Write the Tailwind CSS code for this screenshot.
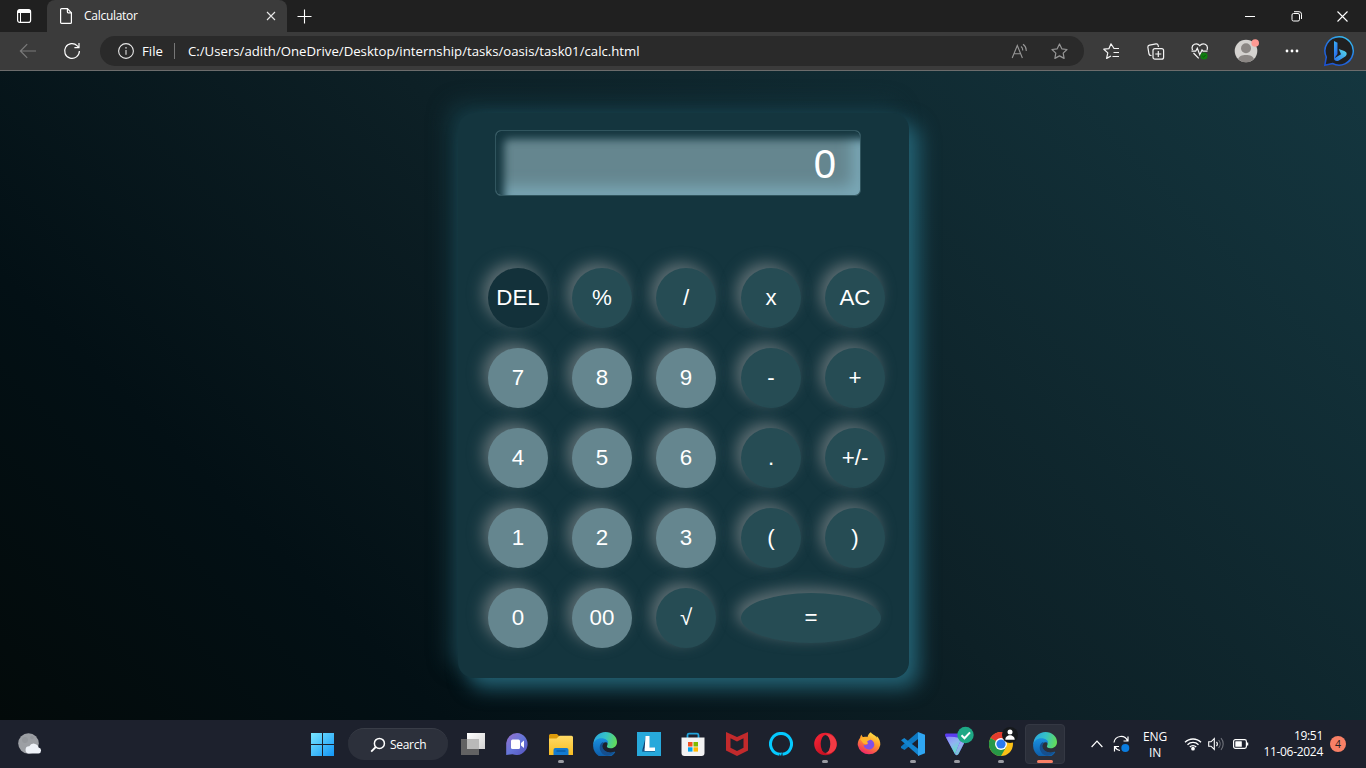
<!DOCTYPE html>
<html lang="en">
<head>
<meta charset="utf-8">
<title>Calculator</title>
<script src="https://cdn.jsdelivr.net/npm/@tailwindcss/browser@4"></script>
</head>
<body class="w-[1366px] h-[768px] overflow-hidden flex flex-col font-['Open_Sans','Noto_Sans',sans-serif] text-white bg-black">
<!-- tab strip -->
<header class="h-8 shrink-0 bg-[#202020] flex">
  <div class="w-[47px] h-8 flex items-center justify-center">
    <svg width="16" height="16" viewBox="0 0 16 16"><rect x="1.6" y="1.6" width="13" height="12.8" rx="2.2" fill="none" stroke="#fff" stroke-width="1.2"/><path d="M1.6 5V3.6a2 2 0 0 1 2-2h9a2 2 0 0 1 2 2V5z" fill="#fff"/><path d="M4.5 5v9" stroke="#fff"/></svg>
  </div>
  <div class="w-60 h-8 bg-[#3b3b3b] rounded-t-lg flex items-center pl-3 pr-[11px]">
    <svg width="14" height="18" viewBox="0 0 14 18" fill="none" stroke="#fff" stroke-width="1.2"><path d="M1.6 2.6a1 1 0 0 1 1-1h5.8l4 4.2v9.6a1 1 0 0 1-1 1H2.6a1 1 0 0 1-1-1z"/><path d="M8.4 1.6v3.4a.8.8 0 0 0 .8.8h3.200"/></svg>
    <span class="ml-[11px] text-[12px] leading-4 tracking-[-0.28px]">Calculator</span>
    <svg class="ml-auto" width="10" height="10" viewBox="0 0 10 10"><path d="M1 1l8 8M9 1L1 9" stroke="#e8e8e8" stroke-width="1.1"/></svg>
  </div>
  <div class="w-[35px] h-8 flex items-center justify-center">
    <svg width="15" height="15" viewBox="0 0 15 15"><path d="M7.500 .5v14M.5 7.500h14" stroke="#fff" stroke-width="1.1"/></svg>
  </div>
  <div class="ml-auto mr-px flex h-8">
    <div class="w-[46px] flex items-center justify-center"><svg width="10" height="10"><path d="M0 5.500h10" stroke="#fff"/></svg></div>
    <div class="w-[46px] flex items-center justify-center"><svg width="11" height="11" viewBox="0 0 11 11" fill="none" stroke="#fff"><rect x="1" y="2.500" width="7.500" height="7.500" rx="1.500"/><path d="M3 .7h5A2.500 2.500 0 0 1 10.500 3.200V8"/></svg></div>
    <div class="w-[46px] flex items-center justify-center"><svg width="11" height="11" viewBox="0 0 11 11"><path d="M.5.5l10 10M10.500.5l-10 10" stroke="#fff" stroke-width="1.100"/></svg></div>
  </div>
</header>
<!-- toolbar -->
<nav class="h-[39px] shrink-0 bg-[#3b3b3b] border-b border-[#6c6c6c] flex items-center">
  <div class="w-14 flex justify-center"><svg width="18" height="16" viewBox="0 0 18 16" fill="none" stroke="#7b7b7b" stroke-width="1.200"><path d="M17 8H1.500M8.200 1.200L1.400 8l6.800 6.800"/></svg></div>
  <div class="w-8 flex justify-center"><svg width="18" height="18" viewBox="0 0 18 18" fill="none" stroke="#fff" stroke-width="1.200"><path d="M16.400 9A7.400 7.400 0 1 1 14.300 3.800L15.600 5.200"/><path d="M16 1v4.600h-4.600"/></svg></div>
  <div class="ml-3 w-[984px] h-[30px] rounded-full bg-[#2a2a2a] flex items-center pl-[18px] pr-4">
    <svg width="16" height="16" viewBox="0 0 16 16"><circle cx="8" cy="8" r="7.400" fill="none" stroke="#e8e8e8" stroke-width="1.100"/><path d="M8 7v4.800" stroke="#bbb" stroke-width="1.400"/><circle cx="8" cy="4.800" r=".9" fill="#bbb"/></svg>
    <span class="ml-2 w-[24px] text-[13.200px] leading-4 whitespace-nowrap">File</span>
    <span class="ml-2 w-px h-4 bg-[#777]"></span>
    <span class="ml-[13px] text-[13.200px] leading-4 whitespace-nowrap">C:/Users/adith/OneDrive/Desktop/internship/tasks/oasis/task01/calc.html</span>
    <svg class="ml-auto" width="17" height="16" viewBox="0 0 17 16" fill="none" stroke="#969696" stroke-width="1.100"><path d="M1.200 15L6.300 2.500 11.400 15M3 10.700h6.600M10 3.500a4.500 4.500 0 0 1 1.700 4M12 1.200a7.500 7.500 0 0 1 3.200 6.800"/></svg>
    <svg class="ml-[23px]" width="17" height="17" viewBox="0 0 17 17" fill="none" stroke="#969696" stroke-width="1.200" stroke-linejoin="round"><path d="M8.500 1l2.300 4.800 5.200.7-3.800 3.600.9 5.300-4.600-2.500-4.600 2.500.9-5.300L1 6.500l5.200-.7z"/></svg>
  </div>
  <div class="ml-[19px] flex items-center">
    <svg width="17" height="17" viewBox="0 0 17 17" fill="none" stroke="#f4f4f4" stroke-width="1.200" stroke-linejoin="round"><path d="M16 5.500h-5L8 .8 6 5.600.8 6.200l4 3.700-1.200 5.500L8 13M10.500 9.500H16M9.500 13.500H16"/></svg>
    <svg class="ml-[27px]" width="18" height="17" viewBox="0 0 18 17" fill="none" stroke="#f4f4f4" stroke-width="1.200"><path d="M4.500 12.500H4A2 2 0 0 1 2 11L.9 4.500a2 2 0 0 1 1.600-2.300L9 .9a2 2 0 0 1 2.200 1.600L11.400 4"/><rect x="6" y="5.600" width="10.600" height="10.600" rx="2"/><path d="M11.300 8v6M8.300 11h6"/></svg>
    <svg class="ml-[26px]" width="18" height="17" viewBox="0 0 18 17" fill="none" stroke="#f4f4f4" stroke-width="1.200"><path d="M1.500 7C-.5 1 6-.8 8.800 2.700 11.500-.8 18 1 16 7M2.500 10l5.200 5.400"/><path d="M.5 8.200h4.200l1.600-3 2.500 6.500 2.200-4.800 1 1.300h4.500"/><circle cx="13" cy="13" r="3.600" fill="#107c10" stroke="none"/><path d="M11.400 13l1.200 1.200 2-2.200" stroke="#0b4a0b" stroke-width=".8"/></svg>
    <svg class="ml-[25px]" width="26" height="24" viewBox="0 0 26 24"><circle cx="12" cy="12" r="11.300" fill="#d4d2cf"/><circle cx="12" cy="9.300" r="5" fill="#8b8784"/><path d="M4.200 20.200C4.200 14.500 19.800 14.500 19.800 20.200A11.300 11.300 0 0 1 4.200 20.200z" fill="#8b8784"/><circle cx="21.200" cy="4" r="3.800" fill="#ff9a93"/></svg>
    <svg class="ml-[25px]" width="14" height="4" fill="#fff"><circle cx="2" cy="2" r="1.400"/><circle cx="7" cy="2" r="1.400"/><circle cx="12" cy="2" r="1.400"/></svg>
    <svg class="ml-6" width="32" height="32" viewBox="0 0 32 32"><defs><linearGradient id="bb" x1="0" y1="1" x2=".6" y2="0"><stop offset="0" stop-color="#1b4fd0"/><stop offset=".6" stop-color="#2372e4"/><stop offset="1" stop-color="#35b5f0"/></linearGradient><linearGradient id="bl" x1="0" y1="0" x2=".5" y2="1"><stop offset="0" stop-color="#3bb4f5"/><stop offset="1" stop-color="#2765ea"/></linearGradient><linearGradient id="br" x1="0" y1="1" x2="1" y2="0"><stop offset="0" stop-color="#2a74f0"/><stop offset="1" stop-color="#58dfe8"/></linearGradient></defs><path d="M16 1.700a14.200 14.200 0 1 1-6.500 26.800L1.800 30.300 3.300 22A14.200 14.200 0 0 1 16 1.700z" fill="#202020" stroke="url(#bb)" stroke-width="1.500"/><path d="M11 6l3.500 1.700V19l-3.500 5z" fill="url(#bl)"/><path d="M11 23.500L18 19.300l-2.300-5.300 5.600 2c3.600 1.500 2.600 4.600.6 5.800l-6 3.600c-2.500 1.300-4.900 0-4.900-1.900z" fill="url(#br)"/></svg>
  </div>
</nav>
<!-- page -->
<main class="h-[649px] shrink-0 overflow-hidden flex justify-center pl-[1px] pt-[42px] bg-[linear-gradient(45deg,#030a0a_0%,#031015_22%,#0d2026_52%,#14363f_100%)]">
  <section class="w-[451px] h-[565px] rounded-[16px] bg-[#14353e] shadow-[10px_10px_20px_#246274,-10px_-10px_20px_#14353e] pt-[17px] font-['Liberation_Sans',Arial,sans-serif]">
    <div class="ml-[37px] w-[366px] h-[66px] rounded-md border border-[#31555e] bg-[#65868f] shadow-[inset_8px_8px_8px_#14353e,inset_-8px_-8px_15px_#7aa8b7] flex items-center justify-end pt-0.5 pr-6 text-[40px] leading-none">0</div>
    <div class="mt-[72px] ml-[30px] grid grid-cols-[84px_84px_85px_84px_60px] auto-rows-[60px] gap-y-5 text-[22.300px] *:flex *:items-center *:justify-center *:size-[60px] *:rounded-[50%] *:shadow-[-5px_-5px_15px_#5e6e73] *:bg-[#264c54]">
      <button class="bg-[#13313a]!">DEL</button><button>%</button><button>/</button><button>x</button><button>AC</button>
      <button class="bg-[#65868f]!">7</button><button class="bg-[#65868f]!">8</button><button class="bg-[#65868f]!">9</button><button>-</button><button>+</button>
      <button class="bg-[#65868f]!">4</button><button class="bg-[#65868f]!">5</button><button class="bg-[#65868f]!">6</button><button>.</button><button>+/-</button>
      <button class="bg-[#65868f]!">1</button><button class="bg-[#65868f]!">2</button><button class="bg-[#65868f]!">3</button><button>(</button><button>)</button>
      <button class="bg-[#65868f]!">0</button><button class="bg-[#65868f]!">00</button><button>√</button><button class="col-span-2 w-[140px]! h-[50px]! self-center">=</button>
    </div>
  </section>
</main>
<!-- taskbar -->
<svg class="absolute" width="0" height="0"><defs>
<linearGradient id="win" x1="0" y1="0" x2="1" y2="1"><stop offset="0" stop-color="#79e6ff"/><stop offset="1" stop-color="#1296f6"/></linearGradient>
<linearGradient id="e1" x1="0" y1=".3" x2="1" y2=".5"><stop offset="0" stop-color="#2aa6e0"/><stop offset=".5" stop-color="#35c2c6"/><stop offset="1" stop-color="#63dc58"/></linearGradient>
<linearGradient id="e2" x1="0" y1="0" x2="0" y2="1"><stop offset="0" stop-color="#1a8fe0"/><stop offset="1" stop-color="#0c59a4"/></linearGradient>
<linearGradient id="fo" x1="0" y1="0" x2="0" y2="1"><stop offset="0" stop-color="#ffdb66"/><stop offset="1" stop-color="#f8bd22"/></linearGradient>
<linearGradient id="ff" x1=".8" y1="0" x2=".3" y2="1"><stop offset="0" stop-color="#fff04a"/><stop offset=".45" stop-color="#ff9a2a"/><stop offset="1" stop-color="#f0206a"/></linearGradient>
<linearGradient id="ch" x1="0" y1="0" x2="1" y2="1"><stop offset="0" stop-color="#9a70cc"/><stop offset=".5" stop-color="#6576d8"/><stop offset="1" stop-color="#5550bb"/></linearGradient>
<linearGradient id="vp" x1="0" y1="0" x2=".6" y2="1"><stop offset="0" stop-color="#6a4af5"/><stop offset=".45" stop-color="#a4a0fa"/><stop offset="1" stop-color="#54e0b8"/></linearGradient>
<linearGradient id="vp2" x1="0" y1="0" x2=".5" y2="1"><stop offset="0" stop-color="#8f86f8"/><stop offset=".5" stop-color="#8fb4f0"/><stop offset="1" stop-color="#5fe3c4"/></linearGradient>
<linearGradient id="tv" x1="0" y1="0" x2="1" y2="1"><stop offset="0" stop-color="#fff"/><stop offset="1" stop-color="#d2d2d2"/></linearGradient>
<linearGradient id="op" x1="0" y1="0" x2="1" y2="1"><stop offset="0" stop-color="#ff2638"/><stop offset="1" stop-color="#a80818"/></linearGradient>
<g id="edge"><path d="M.3 13C.3 5 6 0 12.500 0 19 0 24 4.500 24 10c0 4-3 6.300-6.600 6.300-2.700 0-4-1.200-3.400-2.300 1.500-2.500.2-6-4-6C5 8 1 10 .3 13z" fill="url(#e1)"/><path d="M.2 12.500C.8 9 4.200 6.300 8.500 6.300c4 0 6.600 2.200 6.600 4.600C11.500 8.600 8 12 9.300 16c1.200 3.500 6.500 6 11.700 3.800 1-.4 1.500.2.900 1A12 12 0 0 1 .2 12.500z" fill="url(#e2)"/><path d="M9.300 10.200C4.500 13.500 6.500 22.500 14 23.800c3.400-.3 6.300-1.700 8-4-4.500 2.200-10.200.4-12-3.200-1-2.200-.8-4.700.8-6.400z" fill="#154f8e"/></g>
</defs></svg>
<footer class="h-12 shrink-0 bg-[#1d212d] flex items-center text-[12px]">
  <div class="ml-[2px] w-14 flex justify-center"><svg width="26" height="24" viewBox="0 0 26 24"><circle cx="11.500" cy="11.500" r="10.300" fill="#9c9fa4"/><circle cx="8" cy="8" r="3" fill="#94979c"/><circle cx="15" cy="5.500" r="1.800" fill="#94979c"/><path d="M12 21.500a3.600 3.600 0 0 1 .3-7.200 5 5 0 0 1 9.300 1.100 3.100 3.100 0 0 1-.1 6.100z" fill="#eef2f8"/></svg></div>
  <div class="ml-[253px] w-[23px]"><svg width="23" height="23" viewBox="0 0 23 23" fill="url(#win)"><path d="M0 0h11v11H0zM12 0h11v11H12zM0 12h11v11H0zM12 12h11v11H12z"/></svg></div>
  <div class="ml-[14px] w-[100px] h-8 rounded-full bg-[#2c303b] border-t border-[#393d47] flex items-center pl-[22px]">
    <svg width="16" height="16" viewBox="0 0 16 16" fill="none" stroke="#fff" stroke-width="1.500"><circle cx="9.400" cy="6.400" r="5"/><path d="M5.800 10L1.200 14.600" stroke-width="1.800"/></svg>
    <span class="ml-1 text-[12px] leading-4 tracking-[-0.300px]">Search</span>
  </div>
  <div class="ml-[3px] flex h-12 *:w-11 *:h-12 *:relative *:flex *:items-center *:justify-center">
    <div><svg width="24" height="24" viewBox="0 0 24 24"><rect x="6" y="1" width="18" height="16" fill="url(#tv)"/><rect x="0" y="7" width="18" height="16" fill="#666" opacity=".95"/><rect x="6" y="7" width="12" height="10" fill="#b9b9b9"/></svg></div>
    <div><svg width="24" height="24" viewBox="0 0 24 24"><path d="M12 1a11 11 0 1 1-4.500 21.200L1.200 23V11A11 11 0 0 1 12 1z" fill="url(#ch)"/><rect x="6" y="7.500" width="9" height="9.500" rx="1.500" fill="#fff"/><path d="M16 11l3-2.500v7.500l-3-2.500z" fill="#fff"/></svg></div>
    <div><svg width="24" height="24" viewBox="0 0 24 24"><path d="M0 3.500A1.500 1.500 0 0 1 1.500 2H8l2.500 2.500L8 7H0z" fill="#dc9a0a"/><path d="M0 6.500h7.500l3-2.700h12A1.500 1.500 0 0 1 24 5.300V23H0z" fill="url(#fo)"/><path d="M4.500 23v-5a2 2 0 0 1 2-2h11a2 2 0 0 1 2 2v5z" fill="#127ad0"/><path d="M7.500 19h9" stroke="#075aa4" stroke-width="1.400"/></svg><i class="absolute bottom-[5px] w-[6px] h-[3px] rounded-full bg-[#9a9ca2]"></i></div>
    <div><svg width="24" height="24" viewBox="0 0 24 24"><use href="#edge"/></svg></div>
    <div><svg width="24" height="24" viewBox="0 0 24 24"><path d="M0 0h24v24H0z" fill="#27a9db"/><path d="M9 4v11l-4 4.500z" fill="#123c6b"/><path d="M5 19.500l4.500-4 8.500.5v3.500z" fill="#123c6b"/><path d="M8.500 4h4v11.500H18v3.500H7.500z" fill="#fff"/></svg></div>
    <div><svg width="24" height="24" viewBox="0 0 24 24"><path d="M6.500 6V3A1.500 1.500 0 0 1 8 1.700h8A1.500 1.500 0 0 1 17.500 3v3" fill="none" stroke="#20a4dc" stroke-width="1.800"/><path d="M.5 5.500h23V21a3 3 0 0 1-3 3h-17a3 3 0 0 1-3-3z" fill="#f2f2f2"/><path d="M7 10h4.500v4.500H7z" fill="#f25022"/><path d="M12.500 10H17v4.500h-4.500z" fill="#7fba00"/><path d="M7 15.300h4.500v4.300H7z" fill="#00a4ef"/><path d="M12.500 15.300H17v4.300h-4.500z" fill="#ffb900"/></svg></div>
    <div><svg width="22" height="24" viewBox="0 0 22 24"><path d="M0 0l11 5L22 0v18.500L11 24 0 18.500z" fill="#c22a2c"/><path d="M4.500 6.200L11 9.500l6.500-3.300v9.600L11 19l-6.500-3.200z" fill="#1d212d"/></svg></div>
    <div><svg width="24" height="24" viewBox="0 0 24 24"><path d="M10.500 22.300A10.500 10.500 0 1 1 13.500 22.300" fill="none" stroke="#05caff" stroke-width="3"/><path d="M9.500 21l3.500-.5-1 3.500z" fill="#05caff"/></svg></div>
    <div><svg width="23" height="24" viewBox="0 0 23 24"><ellipse cx="11.500" cy="12" rx="11.300" ry="11.300" fill="url(#op)"/><path d="M11.500 3c4-2.500 11 2 11.200 9s-7 11.500-11.200 9z" fill="#f23a44"/><ellipse cx="11.500" cy="12" rx="4.800" ry="9" fill="#1d212d"/></svg><i class="absolute bottom-[5px] w-[6px] h-[3px] rounded-full bg-[#9a9ca2]"></i></div>
    <div><svg width="24" height="24" viewBox="0 0 24 24"><path d="M4.500 2.500c.3 1.500 1 2.300 1.800 2.800C8 4.500 9.500 4.700 10.500 5 11 3 12 1 14 .2c.3 2 4.500 2.600 6 5.600 0-.8-.2-1.400-.5-2 2.800 2.500 4 6 3.800 9.200A11.500 11.500 0 0 1 .7 13c0-3 .7-5 2.300-7 .2-1.200.7-2.500 1.500-3.500z" fill="url(#ff)"/><path d="M12 7.500c3 0 5.300 2.300 5.300 5s-2.500 5-5.300 5-5.300-2-5.300-4.700c1.500.8 3 .2 4.500-1.200-2.500-.2-3.500-1.600-3-2.800C9.500 7.800 10.500 7.500 12 7.500z" fill="#8050e8"/><path d="M3 7c2-2.500 5.500-2.500 8.800-1.300 1.700.7 2.300 2 .4 2.500-2 .6-2.700 1.400-1 3-2.800 1.700-5.200.6-5.700-.9z" fill="#ffb22c"/></svg></div>
    <div><svg width="24" height="24" viewBox="0 0 24 24"><path d="M17 0v7L3.500 18 0 16v-1.500z" fill="#0d78c2"/><path d="M0 8.300L3.300 6 18 17.500V24z" fill="#1384cf"/><path d="M17 0l7 2.800v18.400L17 24z" fill="#2fa6f2"/></svg><i class="absolute bottom-[5px] w-[6px] h-[3px] rounded-full bg-[#9a9ca2]"></i></div>
    <div><svg width="24" height="24" viewBox="0 0 24 24"><path d="M1.500 1.500h19c2 0 3 1.500 2 3.200L13.500 22c-.8 1.500-2.800 1.500-3.600 0L.3 4.200C-.4 2.800.2 1.500 1.500 1.500z" fill="#5b3df0"/><path d="M1 5.200c4-.8 8.500-.2 12.500.6 2.200.5 2.800 1.600 2 3.200L9.900 22z" fill="url(#vp2)"/><path d="M15.500 9L22 5.300 13.500 22c-.8 1.500-2.800 1.500-3.600 0z" fill="url(#vp)"/></svg><svg class="absolute left-[22px] top-[6px]" width="18" height="18" viewBox="0 0 18 18"><circle cx="8.500" cy="9" r="8.200" fill="#1ea885"/><path d="M4.500 9.200l3 3 5.500-5.800" fill="none" stroke="#fff" stroke-width="2"/></svg><i class="absolute bottom-[5px] w-[6px] h-[3px] rounded-full bg-[#9a9ca2]"></i></div>
    <div><svg width="24" height="24" viewBox="0 0 24 24"><circle cx="12" cy="12" r="12" fill="#fbc116"/><path d="M12 12L1.600 6A12 12 0 0 1 22.400 6z" fill="#e33b2e"/><path d="M12 12L1.600 6A12 12 0 0 0 12 24l5.200-9z" fill="#279847"/><path d="M12 5.500h11L22.400 6H12z" fill="#e33b2e"/><circle cx="12" cy="12" r="6" fill="#fff"/><circle cx="12" cy="12" r="4.600" fill="#2a7af0"/></svg><svg class="absolute left-[23px] top-[7px]" width="16" height="16" viewBox="0 0 16 16"><circle cx="8" cy="8" r="8" fill="#16191c"/><circle cx="8" cy="5" r="2.500" fill="#fff"/><path d="M3.300 12.800c0-6 9.400-6 9.400 0z" fill="#fff"/></svg><i class="absolute bottom-[5px] w-[6px] h-[3px] rounded-full bg-[#9a9ca2]"></i></div>
    <div><span class="w-10 h-10 rounded bg-[#2b2f3a] border border-[#343843] flex items-center justify-center"><svg width="24" height="24" viewBox="0 0 24 24"><use href="#edge"/></svg></span><i class="absolute bottom-[5px] w-4 h-[3px] rounded-full bg-[#f88066]"></i></div>
  </div>
  <div class="ml-auto flex items-center pr-5">
    <svg width="12" height="8" viewBox="0 0 12 8" fill="none" stroke="#fff" stroke-width="1.200"><path d="M.6 7L6 1.200 11.400 7"/></svg>
    <svg class="ml-[10px]" width="17" height="18" viewBox="0 0 17 18" fill="none" stroke="#fff" stroke-width="1.200"><path d="M1 7.500A7 7 0 0 1 14.500 6M15 1.500V6h-4.500M7 15.500A7 7 0 0 1 1.800 11.500M1.500 16.500V11.500H6"/><circle cx="12.300" cy="13" r="4" fill="#0a7de0" stroke="none"/></svg>
    <div class="ml-[12px] w-[26px] pt-0.5 text-center text-[12px] leading-4 tracking-[-0.100px]">ENG<br>IN</div>
    <svg class="ml-[16px]" width="18" height="14" viewBox="0 0 18 14" fill="none" stroke="#fff" stroke-width="1.300"><path d="M1 5.300a11.300 11.300 0 0 1 16 0M3.500 7.700a7.800 7.800 0 0 1 11 0M5.800 10a4.500 4.500 0 0 1 6.400 0"/><circle cx="9" cy="11.700" r="1.200" fill="#fff"/></svg>
    <svg class="ml-[6px]" width="17" height="14" viewBox="0 0 17 14" fill="none" stroke="#fff" stroke-width="1.100"><path d="M.7 4.800H3L6.300 1.500v11L3 9.200H.7z"/><path d="M8.500 4.800a3.500 3.500 0 0 1 0 4.400"/><path d="M10.600 3a6 6 0 0 1 0 8M13 1.200a8.800 8.800 0 0 1 0 11.600" stroke="#70737b"/></svg>
    <svg class="ml-[8px]" width="16" height="10" viewBox="0 0 16 10"><rect x=".6" y=".6" width="12.800" height="8.800" rx="1.800" fill="none" stroke="#fff" stroke-width="1.200"/><rect x="2.300" y="2.300" width="6.500" height="5.400" rx=".5" fill="#fff"/><path d="M14.500 3.500v3" stroke="#fff" stroke-width="1.500"/></svg>
    <div class="ml-[12px] w-[62px] text-right text-[12px] leading-4 tracking-[-0.300px] whitespace-nowrap">19:51<br>11-06-2024</div>
    <div class="ml-[7px] size-4 rounded-full bg-[#f88066] text-[#222] text-[10.500px] leading-4 text-center">4</div>
  </div>
</footer>
</body>
</html>
